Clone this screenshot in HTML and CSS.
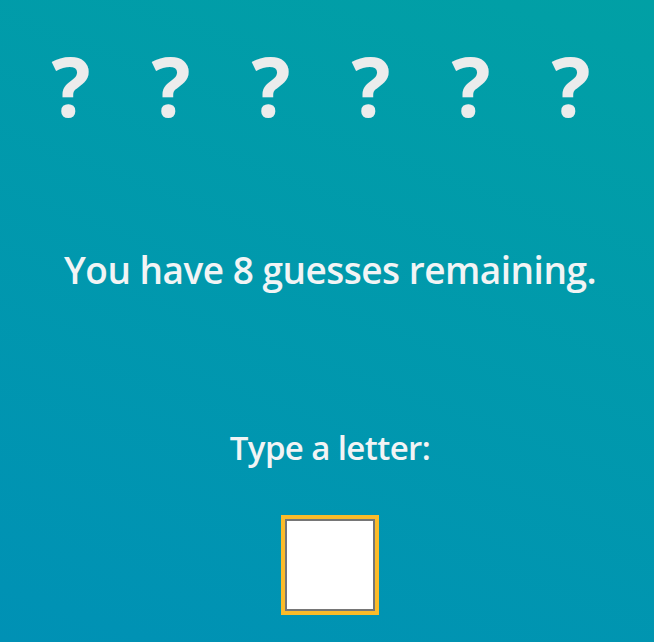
FILE: index.html
```html
<!DOCTYPE html>
<html>
<head>
<meta charset="utf-8">
<link rel="stylesheet" href="styles.css">
</head>
<body>
<main class="game">
  <div class="word">
    <span class="slot">?</span>
    <span class="slot">?</span>
    <span class="slot">?</span>
    <span class="slot">?</span>
    <span class="slot">?</span>
    <span class="slot">?</span>
  </div>
  <p class="status">You have 8 guesses remaining.</p>
  <label class="prompt" for="letter">Type a letter:</label>
  <input id="letter" class="letter" type="text" maxlength="1">
</main>
</body>
</html>
```

FILE: styles.css
```css
html, body {
  margin: 0;
  padding: 0;
  height: 100%;
}
body {
  background: linear-gradient(200deg, #01a0a5 0%, #0091b5 100%);
  font-family: "Open Sans", "Noto Sans", sans-serif;
  color: #f2f4f5;
  overflow: hidden;
}
.game {
  display: flex;
  flex-direction: column;
  align-items: center;
  padding-left: 6px;
}
.word {
  display: flex;
  margin-top: 30px;
  height: 110px;
  padding-right: 18px;
}
.slot {
  width: 100px;
  text-align: center;
  font-size: 82px;
  font-weight: 700;
  line-height: 110px;
  color: #ececec;
}
.status {
  margin: 100px 0 0 0;
  font-size: 37px;
  font-weight: 600;
  letter-spacing: -0.5px;
  line-height: 60px;
}
.prompt {
  margin-top: 123px;
  font-size: 33px;
  font-weight: 600;
  letter-spacing: -0.6px;
  line-height: 50px;
}
.letter {
  margin-top: 46px;
  box-sizing: border-box;
  width: 90px;
  height: 92px;
  border: 2px solid #767676;
  border-radius: 0;
  outline: 4px solid #fbbb29;
  background: #fff;
  font-size: 40px;
  text-align: center;
}
```
